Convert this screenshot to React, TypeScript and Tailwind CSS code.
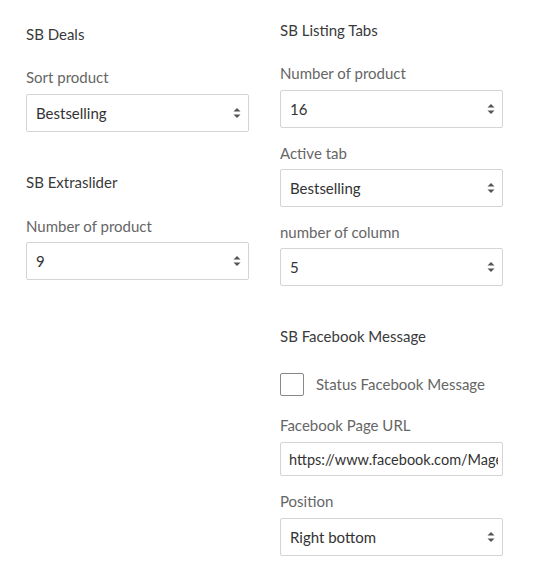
const font = "font-['Lato','Liberation_Sans',sans-serif]";

function Arrows() {
  return (
    <svg width="8" height="12" viewBox="0 0 8 12" className="shrink-0">
      <path d="M4 1 L7.5 4.5 L0.5 4.5 Z" fill="#555" />
      <path d="M4 11 L7.5 7.5 L0.5 7.5 Z" fill="#555" />
    </svg>
  );
}

function Select({ value, className = "" }: { value: string; className?: string }) {
  return (
    <div
      className={`flex h-[38px] w-[223px] items-center justify-between rounded-[2px] border border-[#d4d4d4] bg-white pl-[9px] pr-[7px] text-[15px] text-[#333] ${className}`}
    >
      <span>{value}</span>
      <Arrows />
    </div>
  );
}

function Label({ children, className = "" }: { children: string; className?: string }) {
  return <div className={`h-5 text-[15px] leading-5 text-[#666] ${className}`}>{children}</div>;
}

function Heading({ children, className = "" }: { children: string; className?: string }) {
  return <div className={`h-5 text-[15px] leading-5 text-[#3a3a3a] ${className}`}>{children}</div>;
}

export default function App() {
  return (
    <div className={`flex w-[553px] min-h-[581px] gap-[31px] bg-white pl-[26px] ${font}`}>
      <div className="flex w-[223px] flex-col">
        <Heading className="mt-[24px]">SB Deals</Heading>
        <Label className="mt-[23px]">Sort product</Label>
        <Select value="Bestselling" className="mt-[7px]" />
        <Heading className="mt-[40px]">SB Extraslider</Heading>
        <Label className="mt-[24px]">Number of product</Label>
        <Select value="9" className="mt-[6px]" />
      </div>
      <div className="flex w-[223px] flex-col">
        <Heading className="mt-[20px]">SB Listing Tabs</Heading>
        <Label className="mt-[23px]">Number of product</Label>
        <Select value="16" className="mt-[7px]" />
        <Label className="mt-[15px]">Active tab</Label>
        <Select value="Bestselling" className="mt-[6px]" />
        <Label className="mt-[15px]">number of column</Label>
        <Select value="5" className="mt-[6px]" />
        <Heading className="mt-[40px]">SB Facebook Message</Heading>
        <label className="mt-[27px] flex items-center gap-[12px]">
          <span className="h-[23px] w-[24px] rounded-[2px] border border-[#888] bg-white" />
          <span className="text-[15px] text-[#666]">Status Facebook Message</span>
        </label>
        <Label className="mt-[19px]">Facebook Page URL</Label>
        <input
          readOnly
          value="https://www.facebook.com/MagenTech"
          className="mt-[7px] h-[34px] w-[223px] rounded-[2px] border border-[#d4d4d4] bg-white pl-[8px] pr-[4px] text-[14.5px] text-[#333] outline-none"
        />
        <Label className="mt-[15px]">Position</Label>
        <Select value="Right bottom" className="mt-[7px]" />
      </div>
    </div>
  );
}
